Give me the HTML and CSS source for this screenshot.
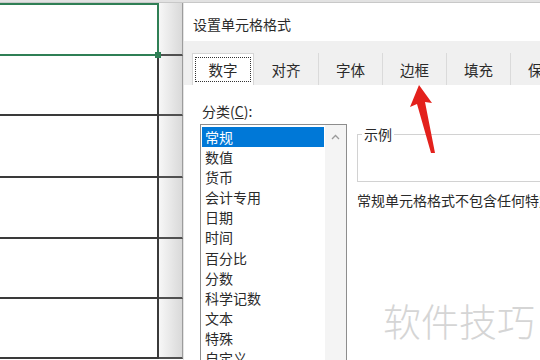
FILE: index.html
```html
<!DOCTYPE html>
<html lang="zh-CN">
<head>
  <meta charset="utf-8" />
  <title>设置单元格格式</title>
  <meta name="viewport" content="width=device-width, initial-scale=1.0" />
  <link rel="stylesheet" href="styles.css">
</head>

<body>
  <div class="topbar"></div>

  <div class="main">
    <div class="sheet">
      <div class="cell active"></div>
      <div class="cell edge"></div>
      <div class="cell"></div>
      <div class="cell edge"></div>
      <div class="cell"></div>
      <div class="cell edge"></div>
      <div class="cell"></div>
      <div class="cell edge"></div>
      <div class="cell"></div>
      <div class="cell edge"></div>
      <div class="cell"></div>
      <div class="cell edge"></div>
    </div>

    <div class="dialog">
      <div class="dialog-title">设置单元格格式</div>

      <div class="tabs">
        <div class="tab on"><span>数字</span></div>
        <div class="tab">对齐</div>
        <div class="tab">字体</div>
        <div class="tab">边框</div>
        <div class="tab">填充</div>
        <div class="tab">保护</div>
      </div>

      <div class="dialog-body">
        <div class="category">
          <div class="label">分类(<u>C</u>):</div>
          <div class="listbox">
            <ul class="items">
              <li class="on">常规</li>
              <li>数值</li>
              <li>货币</li>
              <li>会计专用</li>
              <li>日期</li>
              <li>时间</li>
              <li>百分比</li>
              <li>分数</li>
              <li>科学记数</li>
              <li>文本</li>
              <li>特殊</li>
              <li>自定义</li>
            </ul>
            <div class="scroll">
              <svg width="21" height="22" viewBox="0 0 21 22">
                <path d="M7 14 L10.5 10.5 L14 14" fill="none" stroke="#9a9a9a" stroke-width="1.3" />
              </svg>
            </div>
          </div>
        </div>

        <div class="detail">
          <fieldset class="sample">
            <legend>示例</legend>
          </fieldset>
          <p class="desc">常规单元格格式不包含任何特定的数字格式。</p>
        </div>
      </div>
    </div>
  </div>

  <!-- red arrow pointing at the border tab -->
  <svg class="arrow" width="540" height="360" viewBox="0 0 540 360">
    <path d="M419 85 L432 103 L425 102 L435 153 L431 153 L417 104 L410 107 Z" fill="#e3211c" />
  </svg>

  <div class="watermark">软件技巧</div>
</body>
</html>
```

FILE: styles.css
```css
* {
  box-sizing: border-box;
}

html, body {
  margin: 0;
  padding: 0;
  background-color: white;
}

body {
  position: relative;
  width: 540px;
  height: 360px;
  overflow: hidden;
  font-family: "Noto Sans CJK SC", sans-serif;
  font-size: 14px;
  color: #2a2a2a;
}

.topbar {
  height: 3px;
  background-color: #e2e2e2;
  border-bottom: 1px solid #c8c8c8;
}

.main {
  display: flex;
  height: 357px;
}

/* spreadsheet behind the dialog */
.sheet {
  width: 183px;
  flex-shrink: 0;
  display: grid;
  grid-template-columns: 159px 24px;
  grid-template-rows: 53px 60px 62px 61px 60px 60px;
}

.cell {
  border-bottom: 2px solid #3a3a3a;
  border-right: 2px solid #3a3a3a;
}

.cell.active {
  position: relative;
  border: 2px solid #2f7f55;
  border-left: none;
}

.cell.active::after {
  content: "";
  position: absolute;
  right: -4px;
  bottom: -4px;
  width: 6px;
  height: 6px;
  background-color: #2f7f55;
}

.cell.edge {
  background: linear-gradient(to right, #f7f7f7, #d9d9d9);
  border-right: 1px solid #9c9c9c;
  border-bottom-color: #505050;
}

/* format cells dialog */
.dialog {
  flex: 1;
  border-left: 1px solid #e4e4e4;
  background-color: white;
  overflow: hidden;
}

.dialog-title {
  height: 38px;
  padding: 13px 0 0 9px;
  line-height: 16px;
  font-size: 14px;
}

.tabs {
  display: flex;
  align-items: flex-end;
  height: 44px;
  padding-left: 8px;
  background-color: #f0f0f0;
}

.tab {
  flex-shrink: 0;
  width: 64px;
  height: 32px;
  padding-top: 3px;
  line-height: 28px;
  text-align: center;
  font-size: 14.5px;
  border-left: 1px solid #dadada;
}

.tab.on {
  width: 62px;
  padding: 3px 2px 2px;
  background-color: white;
  border: 1px solid #d6d6d6;
  border-bottom: none;
}

.tab.on span {
  display: block;
  height: 25px;
  line-height: 23px;
  border: 1px dotted #333;
}

.tab.on + .tab {
  border-left: none;
}

.dialog-body {
  display: flex;
  height: 275px;
  padding: 17px 0 0 16px;
  overflow: hidden;
}

.category {
  width: 147px;
  flex-shrink: 0;
}

.label {
  line-height: 18px;
  padding-left: 2px;
  margin-bottom: 4px;
}

.listbox {
  display: flex;
  height: 260px;
  border: 1px solid #8d8d8d;
}

.items {
  width: 124px;
  margin: 0;
  padding: 2px 1px;
  list-style: none;
}

.items li {
  height: 20.1px;
  line-height: 20px;
  padding-left: 3px;
  white-space: nowrap;
}

.items li.on {
  background-color: #0078d7;
  color: white;
}

.scroll {
  width: 21px;
  background-color: #f4f4f4;
}

.scroll svg {
  display: block;
}

.detail {
  flex: 1;
  padding-left: 10px;
}

.sample {
  width: 260px;
  height: 56px;
  margin: 24px 0 0;
  padding: 0;
  border: 1px solid #d2d2d2;
}

.sample legend {
  margin-left: 4px;
  padding: 0 2px;
  line-height: 16px;
}

.desc {
  margin: 10px 0 0;
  line-height: 16px;
  white-space: nowrap;
}

.arrow {
  position: absolute;
  top: 0;
  left: 0;
  pointer-events: none;
}

.watermark {
  position: absolute;
  left: 383px;
  top: 301px;
  font-size: 38px;
  line-height: 38px;
  font-weight: 300;
  color: #d5d5d5;
  white-space: nowrap;
  pointer-events: none;
}
```
